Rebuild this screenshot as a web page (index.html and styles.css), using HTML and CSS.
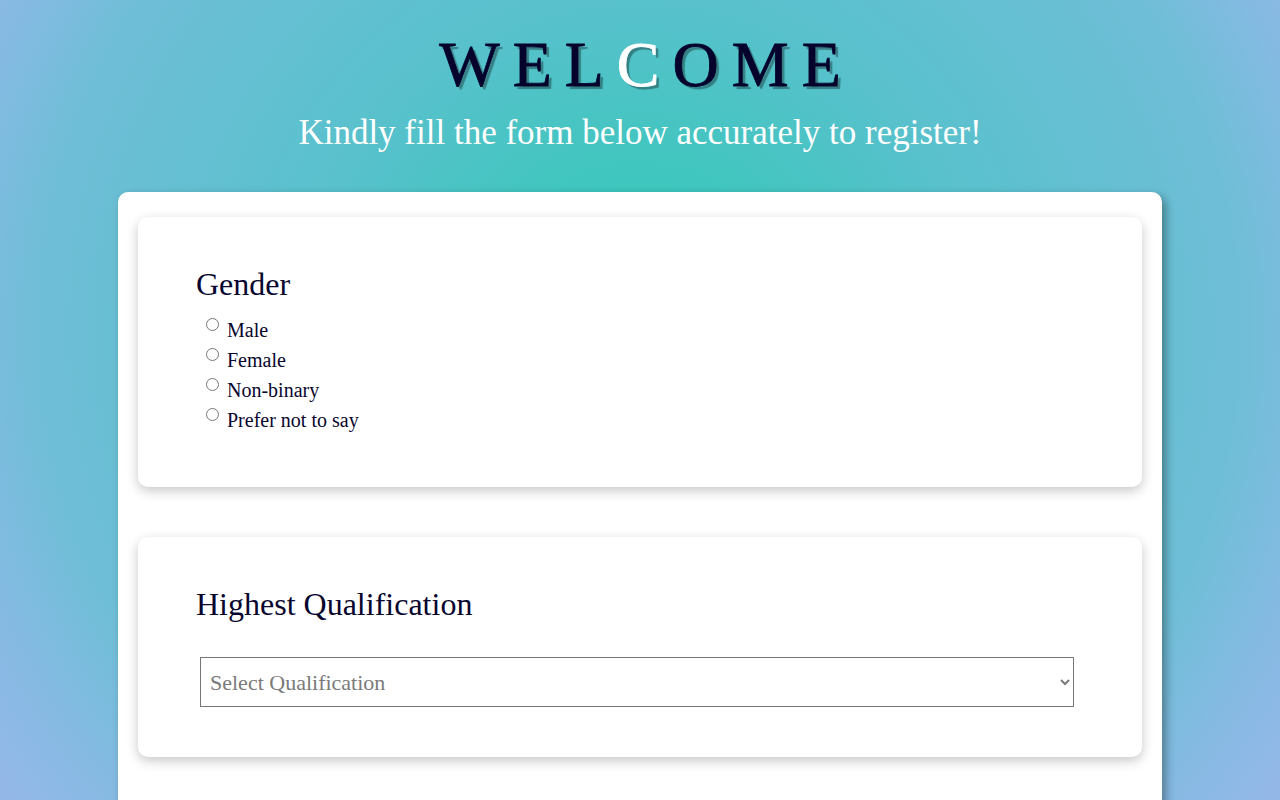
FILE: index.html
```html
<!DOCTYPE html>
<html lang="en">
<head>
<meta charset="utf-8">
<title>Registration</title>
<link rel="stylesheet" href="styles.css">
</head>
<body>
<header class="hero">
  <h1 class="title">WEL<span class="title-accent">C</span>OME</h1>
  <p class="subtitle">Kindly fill the form below accurately to register!</p>
</header>
<main class="form-wrap">
  <section class="card card-gender">
    <h2 class="card-title">Gender</h2>
    <div class="radio-list">
      <div class="radio-row"><input type="radio" name="gender" id="g1" class="radio"> <label for="g1">Male</label></div>
      <div class="radio-row"><input type="radio" name="gender" id="g2" class="radio"> <label for="g2">Female</label></div>
      <div class="radio-row"><input type="radio" name="gender" id="g3" class="radio"> <label for="g3">Non-binary</label></div>
      <div class="radio-row"><input type="radio" name="gender" id="g4" class="radio"> <label for="g4">Prefer not to say</label></div>
    </div>
  </section>
  <section class="card card-qual">
    <h2 class="card-title">Highest Qualification</h2>
    <select class="select">
      <option>Select Qualification</option>
      <option>High School</option>
      <option>Bachelor's Degree</option>
      <option>Master's Degree</option>
      <option>Doctorate</option>
    </select>
  </section>
</main>
</body>
</html>
```
FILE: styles.css
```css
html, body {
  margin: 0;
  padding: 0;
}
body {
  height: 800px;
  font-family: "Liberation Serif", "Times New Roman", serif;
  color: #08062e;
  background: radial-gradient(circle at 640px 330px, #36c9b9 0px, #3fc6be 150px, #58c1cc 330px, #6fbed7 600px, #86bae3 700px, #93b8e8 780px);
  background-color: #90b9e6;
  overflow: hidden;
}
.hero {
  padding-top: 33px;
  text-align: center;
}
.title {
  margin: 0;
  font-size: 64px;
  line-height: 64px;
  font-weight: 400;
  letter-spacing: 13px;
  padding-left: 13px;
  color: #05022c;
  -webkit-text-stroke: 0.8px currentColor;
  text-shadow: 3px 3px 1px rgba(0, 0, 0, 0.35);
}
.title-accent {
  color: #ffffff;
}
.subtitle {
  margin: 15px 0 0;
  font-size: 35px;
  line-height: 42px;
  color: #ffffff;
}
.form-wrap {
  width: 1044px;
  margin: 38px auto 0;
  box-sizing: border-box;
  padding: 25px 20px 80px;
  background: #ffffff;
  border-radius: 10px;
  box-shadow: 4px 4px 10px rgba(0, 0, 0, 0.35);
  display: flex;
  flex-direction: column;
  gap: 50px;
}
.card {
  background: #ffffff;
  border-radius: 10px;
  box-shadow: 0 4px 12px rgba(0, 0, 0, 0.22);
  padding: 48px 58px 52px;
}
.card-qual {
  padding-bottom: 50px;
}
.card-title {
  margin: 0;
  font-size: 32px;
  line-height: 38px;
  font-weight: 400;
  color: #08062e;
}
.radio-list {
  margin-top: 12px;
  padding-left: 5px;
}
.radio-row {
  font-size: 20px;
  line-height: 30px;
}
.radio {
  margin: 0 3px 0 5px;
  width: 13px;
  height: 13px;
  vertical-align: 6px;
}
.select {
  display: block;
  margin: 34px 0 0 4px;
  width: 874px;
  height: 50px;
  box-sizing: border-box;
  padding: 0 5px;
  font-family: "Liberation Serif", "Times New Roman", serif;
  font-size: 22px;
  color: #7a7a7a;
  background: #ffffff;
  border: 1px solid #767676;
  border-radius: 0;
}
```
